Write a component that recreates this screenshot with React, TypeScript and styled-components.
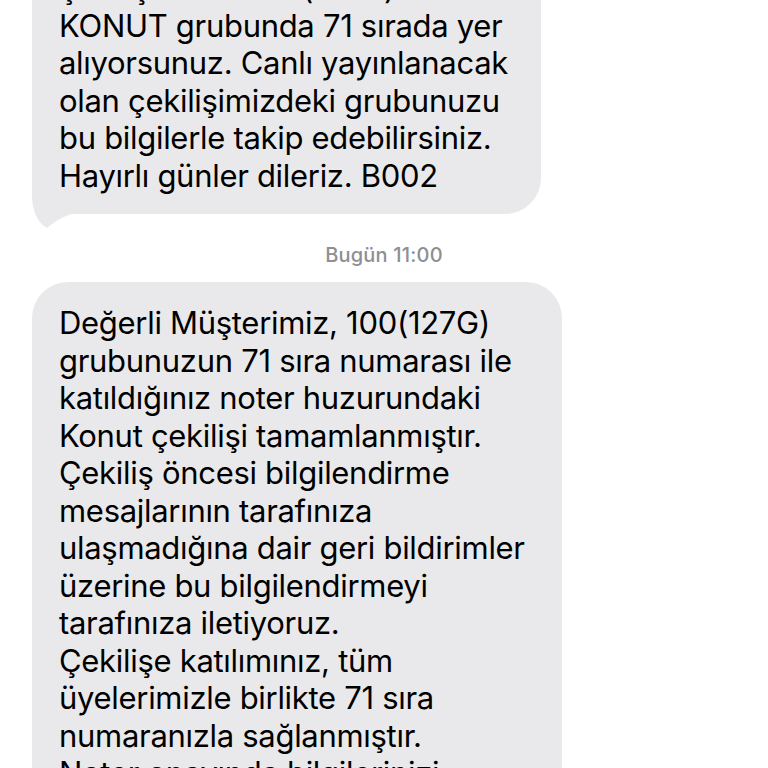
import React from "react";
import styled, { createGlobalStyle } from "styled-components";

const GlobalStyle = createGlobalStyle`
  html, body {
    margin: 0;
    padding: 0;
    background: #ffffff;
    overflow: hidden;
  }
`;

const Thread = styled.div`
  display: flex;
  flex-direction: column;
  align-items: flex-start;
  margin-top: -53px;
  padding-left: 32px;
  font-family: "Inter", "Noto Sans", sans-serif;
`;

const BubbleWrap = styled.div`
  position: relative;
`;

const Bubble = styled.div<{ $width: number; $bottom?: number }>`
  position: relative;
  z-index: 1;
  box-sizing: border-box;
  width: ${({ $width }) => $width}px;
  padding: 22px 0 ${({ $bottom = 18 }) => $bottom}px 27px;
  background: #e9e9eb;
  border-radius: 36px;
  color: #000000;
  font-size: 31px;
  line-height: 37.5px;
  letter-spacing: -0.3px;
  white-space: pre;
`;

const Tail = styled.svg`
  position: absolute;
  left: 0;
  bottom: -16px;
  width: 50px;
  height: 60px;
  z-index: 0;
`;

const Stamp = styled.div`
  align-self: stretch;
  margin: 30px 32px 16px 0;
  text-align: center;
  color: #8e8e93;
  font-size: 20px;
  line-height: 22px;
  font-weight: 500;
  letter-spacing: 0.2px;
`;

const first = [
  "çekilişimizde 100(127G)",
  "KONUT grubunda 71 sırada yer",
  "alıyorsunuz. Canlı yayınlanacak",
  "olan çekilişimizdeki grubunuzu",
  "bu bilgilerle takip edebilirsiniz.",
  "Hayırlı günler dileriz. B002",
];

const second = [
  "Değerli Müşterimiz, 100(127G)",
  "grubunuzun 71 sıra numarası ile",
  "katıldığınız noter huzurundaki",
  "Konut çekilişi tamamlanmıştır.",
  "Çekiliş öncesi bilgilendirme",
  "mesajlarının tarafınıza",
  "ulaşmadığına dair geri bildirimler",
  "üzerine bu bilgilendirmeyi",
  "tarafınıza iletiyoruz.",
  "Çekilişe katılımınız, tüm",
  "üyelerimizle birlikte 71 sıra",
  "numaranızla sağlanmıştır.",
  "Noter onayında bilgilerinizi",
  "kontrol edebilirsiniz.",
];

export default function App() {
  return (
    <>
      <GlobalStyle />
      <Thread>
        <BubbleWrap>
          <Bubble $width={509} $bottom={20}>
            {first.join("\n")}
          </Bubble>
          <Tail viewBox="0 0 50 60">
            <path
              d="M0 0 L0 25 C0 40 5 52 15 58 C22 52 32 45 45 43 L45 0 Z"
              fill="#e9e9eb"
            />
          </Tail>
        </BubbleWrap>
        <Stamp>Bugün 11:00</Stamp>
        <Bubble $width={530}>{second.join("\n")}</Bubble>
      </Thread>
    </>
  );
}
